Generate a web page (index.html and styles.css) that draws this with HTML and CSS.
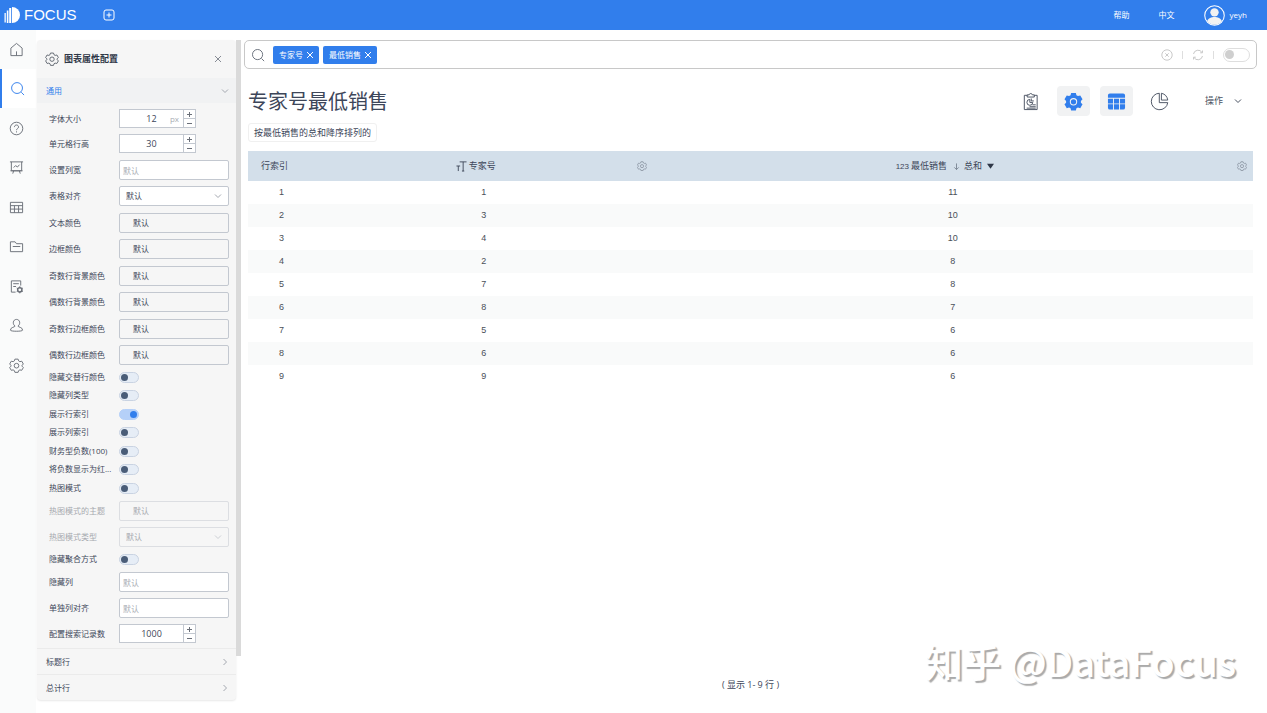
FILE: index.html
```html
<!DOCTYPE html>
<html lang="zh-CN">
<head>
<meta charset="utf-8">
<title>FOCUS</title>
<meta name="viewport" content="width=device-width, initial-scale=1">
<link rel="stylesheet" href="styles.css">
</head>
<body>
<svg class="defs" aria-hidden="true">
  <symbol id="gear" viewBox="0 0 16 16"><path d="M6.3 1.2h3.4l.6 1.9 1.3.8 2-.5 1.7 3-1.4 1.4v.9l1.4 1.5-1.7 2.9-2-.4-1.3.7-.6 1.9H6.3l-.6-1.9-1.3-.7-2 .4-1.7-2.9 1.4-1.5v-.9L.7 6.4l1.7-3 2 .5 1.3-.8z"/><circle cx="8" cy="8.2" r="2.5"/></symbol>
  <symbol id="down" viewBox="0 0 8 8"><path d="M1 2.5l3 3 3-3"/></symbol>
  <symbol id="right" viewBox="0 0 8 8"><path d="M2.5 1l3 3-3 3"/></symbol>
  <symbol id="cross" viewBox="0 0 8 8"><path d="M1 1l6 6M7 1L1 7"/></symbol>
  <symbol id="plus" viewBox="0 0 7 7"><path d="M1 3.5h5M3.5 1v5"/></symbol>
  <symbol id="minus" viewBox="0 0 7 7"><path d="M1 3.5h5"/></symbol>
  <symbol id="search" viewBox="0 0 16 16"><circle cx="7.5" cy="7.5" r="5.8"/><path d="M12 12l3 3"/></symbol>
</svg>
<header class="topbar">
  <a class="logo" href="#">
    <svg class="logo-mark" viewBox="0 0 16 16"><path d="M8 0a8 8 0 0 1 0 16z"/><path d="M5.2 1h2v15h-2zM2.8 3.5h1.6V16H2.8zM.5 6h1.3v9.5H.5z"/></svg>
    <span>FOCUS</span>
  </a>
  <button class="icon-btn" aria-label="新建"><svg class="ico12" viewBox="0 0 12 12"><rect x="1" y="1" width="10" height="10" rx="2"/><path d="M6 3.5v5M3.5 6h5"/></svg></button>
  <nav class="toplinks">
    <a href="#">帮助</a>
    <a href="#">中文</a>
    <a class="user" href="#"><svg class="avatar" viewBox="0 0 20 20"><circle cx="10" cy="10" r="9.3"/><circle class="solid" cx="10" cy="7" r="4"/><path class="solid" d="M3 15.500c1-3 4-4 7-4s6 1 7 4a9 9 0 0 1-14 0z"/></svg>yeyh</a>
  </nav>
</header>
<div class="shell">
  <nav class="side">
    <div class="side-group">
      <a href="#" aria-label="首页"><svg viewBox="0 0 16 16"><path d="M2 6.500L8 1.500l6 5v8H2zM8 10v4.500"/></svg></a>
      <a class="active" href="#" aria-label="搜索"><svg viewBox="0 0 16 16"><use href="#search"/></svg></a>
    </div>
    <div class="side-group">
      <a href="#" aria-label="帮助"><svg viewBox="0 0 16 16"><circle cx="8" cy="8" r="6.700"/><path d="M5.800 6.500c0-3 4.400-3 4.400 0C10.200 8 8 8 8 9.800M8 11v1.200"/></svg></a>
      <a href="#" aria-label="看板"><svg viewBox="0 0 16 16"><path d="M1 2h14M2.500 2v9.500h11V2M1.500 11.500h13M5 11.500L4 14.500M11 11.500l1 3M5 8l2-2 2 1.500L11.200 5"/></svg></a>
    </div>
    <div class="side-group">
      <a href="#" aria-label="数据表"><svg viewBox="0 0 16 16"><path d="M1.500 2.500h13v11h-13zM1.500 6h13M1.500 9.700h13M5.800 6v7.500M10.200 6v7.500"/></svg></a>
      <a href="#" aria-label="资源"><svg viewBox="0 0 16 16"><path d="M1.500 3h5l1.500 2h6.500v8.500h-13zM4 8h8"/></svg></a>
    </div>
    <div class="side-group">
      <a href="#" aria-label="任务"><svg viewBox="0 0 16 16"><path d="M7 14H2.500V2h10v5M4.500 5h6M4.500 8h3"/><circle cx="11.500" cy="11.500" r="2.300" stroke-width="1.600"/><path d="M11.500 7.700v1.500M11.500 13.800v1.500M8.200 9.600l1.300.8M13.500 12.600l1.300.8M8.200 13.400l1.300-.8M13.500 10.400l1.300-.8"/></svg></a>
      <a href="#" aria-label="用户"><svg viewBox="0 0 16 16"><path d="M6.500 8.500C3.500 7 4 1.500 8 1.500s4.500 5.500 1.500 7c0 1.500 5 1 5 4.500 0 1.500-13 1.500-13 0 0-3.500 5-3 5-4.500z"/></svg></a>
    </div>
    <div class="side-group">
      <a href="#" aria-label="设置"><svg viewBox="0 0 16 16"><use href="#gear"/></svg></a>
    </div>
  </nav>

  <aside class="config">
    <div class="panel">
      <div class="panel-head">
        <svg class="ico14"><use href="#gear"/></svg>
        <h2>图表属性配置</h2>
        <button class="icon-btn" aria-label="关闭"><svg class="ico8"><use href="#cross"/></svg></button>
      </div>
      <button class="section open">通用<svg class="ico8"><use href="#down"/></svg></button>
      <form class="fields">
        <div class="group">
          <div class="row"><label for="fs">字体大小</label><span class="num"><input id="fs" value="12"><em>px</em><span class="steps"><button type="button" aria-label="增加"><svg><use href="#plus"/></svg></button><button type="button" aria-label="减少"><svg><use href="#minus"/></svg></button></span></span></div>
          <div class="row"><label for="rh">单元格行高</label><span class="num"><input id="rh" value="30"><span class="steps"><button type="button" aria-label="增加"><svg><use href="#plus"/></svg></button><button type="button" aria-label="减少"><svg><use href="#minus"/></svg></button></span></span></div>
        </div>
        <div class="group">
          <div class="row tall"><label for="cw">设置列宽</label><input class="box" id="cw" placeholder="默认"></div>
          <div class="row tall"><label for="al">表格对齐</label><span class="pick"><select class="box" id="al"><option>默认</option></select><svg class="ico8"><use href="#down"/></svg></span></div>
        </div>
        <div class="group">
          <div class="row tall"><label for="c1">文本颜色</label><button type="button" class="box" id="c1">默认</button></div>
          <div class="row tall"><label for="c2">边框颜色</label><button type="button" class="box" id="c2">默认</button></div>
        </div>
        <div class="group">
          <div class="row tall"><label for="c3">奇数行背景颜色</label><button type="button" class="box" id="c3">默认</button></div>
          <div class="row tall"><label for="c4">偶数行背景颜色</label><button type="button" class="box" id="c4">默认</button></div>
        </div>
        <div class="group">
          <div class="row tall"><label for="c5">奇数行边框颜色</label><button type="button" class="box" id="c5">默认</button></div>
          <div class="row tall"><label for="c6">偶数行边框颜色</label><button type="button" class="box" id="c6">默认</button></div>
          <div class="row short"><label for="t1">隐藏交替行颜色</label><input class="toggle" type="checkbox" id="t1"></div>
          <div class="row short"><label for="t2">隐藏列类型</label><input class="toggle" type="checkbox" id="t2"></div>
        </div>
        <div class="group">
          <div class="row short"><label for="t3">展示行索引</label><input class="toggle" type="checkbox" id="t3" checked></div>
          <div class="row short"><label for="t4">展示列索引</label><input class="toggle" type="checkbox" id="t4"></div>
        </div>
        <div class="group">
          <div class="row short"><label for="t5">财务型负数(100)</label><input class="toggle" type="checkbox" id="t5"></div>
          <div class="row short"><label for="t6">将负数显示为红...</label><input class="toggle" type="checkbox" id="t6"></div>
        </div>
        <div class="group">
          <div class="row short"><label for="t7">热图模式</label><input class="toggle" type="checkbox" id="t7"></div>
        </div>
        <div class="group">
          <div class="row tall off"><label for="h1">热图模式的主题</label><button type="button" class="box" id="h1" disabled>默认</button></div>
          <div class="row tall off"><label for="h2">热图模式类型</label><span class="pick"><select class="box" id="h2" disabled><option>默认</option></select><svg class="ico8"><use href="#down"/></svg></span></div>
          <div class="row short"><label for="t8">隐藏聚合方式</label><input class="toggle" type="checkbox" id="t8"></div>
        </div>
        <div class="group">
          <div class="row tall"><label for="hc">隐藏列</label><input class="box" id="hc" placeholder="默认"></div>
          <div class="row tall"><label for="sa">单独列对齐</label><input class="box" id="sa" placeholder="默认"></div>
          <div class="row"><label for="rc">配置搜索记录数</label><span class="num"><input id="rc" value="1000"><span class="steps"><button type="button" aria-label="增加"><svg><use href="#plus"/></svg></button><button type="button" aria-label="减少"><svg><use href="#minus"/></svg></button></span></span></div>
        </div>
      </form>
      <button class="section">标题行<svg class="ico8"><use href="#right"/></svg></button>
      <button class="section">总计行<svg class="ico8"><use href="#right"/></svg></button>
    </div>
    <div class="scroll"></div>
  </aside>

  <main class="main">
    <div class="searchbar">
      <svg class="ico14"><use href="#search"/></svg>
      <button class="tag">专家号<svg class="ico8"><use href="#cross"/></svg></button>
      <button class="tag">最低销售<svg class="ico8"><use href="#cross"/></svg></button>
      <input class="query" type="text" aria-label="搜索">
      <div class="search-tools">
        <button class="icon-btn" aria-label="清除"><svg class="ico12" viewBox="0 0 12 12"><circle cx="6" cy="6" r="5.200"/><path d="M4.300 4.300l3.400 3.400M7.700 4.300L4.300 7.700"/></svg></button>
        <i class="bar"></i>
        <button class="icon-btn" aria-label="刷新"><svg class="ico12" viewBox="0 0 12 12"><path d="M1.500 5a4.600 4.600 0 0 1 8.500-1.500M10.500 7A4.600 4.600 0 0 1 2 8.500M10.500 1.500v2.300H8.200M1.500 10.500V8.200h2.300"/></svg></button>
        <i class="bar"></i>
        <input class="toggle wide" type="checkbox" aria-label="模式">
      </div>
    </div>
    <div class="content">
      <div class="titlebar">
        <h1>专家号最低销售</h1>
        <div class="tools">
          <button aria-label="报告"><svg viewBox="0 0 20 20"><path d="M6.500 3.500H3.500v15h13.500v-15h-3M6.500 5.300V3h2a1.800 1.800 0 0 1 3.500 0h2v2.300zM9.300 7.800A3.100 3.100 0 1 0 12.400 11H9.300zM10.800 6.800v2.600h2.700M12 13.500h3.500M9 15.500h6.500M6 17h9.500"/></svg></button>
          <button class="on" aria-label="配置"><svg viewBox="0 0 20 20"><path class="fill" fill-rule="evenodd" d="M7.500 1h5l.6 2.400 1.600.9 2.400-.7 2.400 4.100-1.700 1.700v1.800l1.700 1.700-2.400 4.100-2.400-.7-1.600.9-.6 2.300h-5l-.6-2.300-1.600-.9-2.400.7-2.400-4.100 1.700-1.700V9.400L.5 7.700l2.400-4.100 2.400.7 1.600-.9zM10 6.400a3.900 3.900 0 1 0 0 7.800 3.900 3.900 0 0 0 0-7.800zM10 7.500a2.800 2.800 0 1 1 0 5.600A2.800 2.800 0 0 1 10 7.500z"/></svg></button>
          <button class="on" aria-label="表格"><svg viewBox="0 0 20 20"><path class="fill" d="M1 3.500a2 2 0 0 1 2-2h14a2 2 0 0 1 2 2V6H1zM1 7h5.300v5H1zM7.300 7h5.400v5H7.300zM13.700 7H19v5h-5.300zM1 13h5.300v5.500H3a2 2 0 0 1-2-2zM7.300 13h5.400v5.500H7.300zM13.700 13H19v3.500a2 2 0 0 1-2 2h-3.300z"/></svg></button>
          <button aria-label="图表"><svg viewBox="0 0 20 20"><path d="M9.800 1.300a8.700 8.700 0 1 0 8.900 9.900H9.800zM12 1.300v7.200h6.700A8.700 8.700 0 0 0 12 1.300z"/></svg></button>
          <button class="menu">操作<svg class="ico8"><use href="#down"/></svg></button>
        </div>
      </div>
      <div class="sortnote">按最低销售的总和降序排列的</div>
      <table class="grid">
        <colgroup><col class="c-index"><col class="c-expert"><col></colgroup>
        <thead><tr>
          <th>行索引</th>
          <th><div class="th"><span class="th-label"><svg class="type" viewBox="0 0 12 12"><path d="M4 1.500h7.500M7.800 1.500v10M.5 6h4M2.500 6v5.500M6.500 11.500h2.500"/></svg>专家号</span><button class="icon-btn" aria-label="列设置"><svg class="ico10"><use href="#gear"/></svg></button></div></th>
          <th><div class="th"><span class="th-label"><small>123</small>最低销售<svg class="arrow" viewBox="0 0 8 8"><path d="M4 .5v7M1.500 5L4 7.500 6.500 5"/></svg>总和<svg class="tri" viewBox="0 0 8 8"><path d="M0 1.500h8L4 7z"/></svg></span><button class="icon-btn" aria-label="列设置"><svg class="ico10"><use href="#gear"/></svg></button></div></th>
        </tr></thead>
        <tbody>
          <tr><td>1</td><td>1</td><td>11</td></tr>
          <tr><td>2</td><td>3</td><td>10</td></tr>
          <tr><td>3</td><td>4</td><td>10</td></tr>
          <tr><td>4</td><td>2</td><td>8</td></tr>
          <tr><td>5</td><td>7</td><td>8</td></tr>
          <tr><td>6</td><td>8</td><td>7</td></tr>
          <tr><td>7</td><td>5</td><td>6</td></tr>
          <tr><td>8</td><td>6</td><td>6</td></tr>
          <tr><td>9</td><td>9</td><td>6</td></tr>
        </tbody>
      </table>
    </div>
    <p class="count">( 显示 1- 9 行 )</p>
  </main>
</div>
<div class="watermark">知乎 @DataFocus</div>
</body>
</html>
```
FILE: styles.css
```css
* { box-sizing: border-box; }
body {
  margin: 0;
  min-height: 100vh;
  display: flex;
  flex-direction: column;
  position: relative;
  background: #fff;
  color: #3d4659;
  font: 8px/12px "Open Sans", "Noto Sans CJK SC", sans-serif;
}
button, input, select { font: inherit; color: inherit; margin: 0; padding: 0; }
button { background: none; border: 0; }
a { color: inherit; text-decoration: none; }
svg { display: block; flex: none; fill: none; stroke: currentColor; stroke-width: 1; }
.defs { position: absolute; width: 0; height: 0; }
.ico8 { width: 8px; height: 8px; }
.ico10 { width: 10px; height: 10px; }
.ico12 { width: 12px; height: 12px; }
.ico14 { width: 14px; height: 14px; }

.topbar { display: flex; align-items: center; height: 30px; padding: 0 20px 0 4px; background: #317eec; color: #fff; }
.logo { display: flex; align-items: center; gap: 4px; margin-right: 26px; font: 15px/20px "Liberation Sans", sans-serif; }
.logo-mark { width: 16px; height: 16px; fill: #fff; stroke: none; }
.toplinks { display: flex; align-items: center; gap: 29px; margin-left: auto; }
.toplinks a:first-child { margin-left: 0; }
.user { display: flex; align-items: center; gap: 5px; }
.avatar { width: 21px; height: 21px; }
.avatar .solid { fill: #f2f2f2; stroke: none; }

.shell { flex: 1; display: flex; }
.side { display: flex; flex-direction: column; gap: 1px; width: 36px; background: #fafbfb; color: #6a6f78; }
.side a { display: flex; align-items: center; height: 39px; padding-left: 9px; }
.side svg { width: 15px; height: 15px; }
.side a.active { background: #fff; color: #317eec; border-left: 2px solid #317eec; padding-left: 8px; }

.config { display: flex; align-items: flex-start; padding: 10px 0 0 1px; }
.panel { width: 199px; background: #f6f6f6; border-radius: 4px; box-shadow: 0 1px 2px #e8e8e8; }
.scroll { width: 5px; height: 616px; background: #dadada; }
.panel-head { display: flex; align-items: center; gap: 5px; height: 38px; padding: 0 14px 0 8px; color: #555b66; }
.panel-head h2 { flex: 1; margin: 0; font-size: 9px; font-weight: 600; color: #2f3747; }
.panel-head button { color: #868b94; }
.section { display: flex; align-items: center; justify-content: space-between; width: 100%; height: 26px; padding: 0 7px 0 9px; border-top: 1px solid #ebebeb; }
.section svg { color: #a4a8b0; }
.section.open { height: 25px; background: #f1f2f3; border: 0; color: #317eec; }

.fields { display: flex; flex-direction: column; gap: 1px; padding: 3px 7px 2px 12px; }
.row { display: grid; grid-template-columns: 70px 1fr; align-items: center; height: 25px; }
.row.tall { height: 26px; }
.row.short { height: 18px; }
.row label { white-space: nowrap; }
.box { width: 100%; height: 20px; padding: 0 3px; border: 1px solid #c3c8d0; border-radius: 2px; background: #fff; text-align: left; }
button.box { padding-left: 13px; background: #f6f6f6; }
select.box { padding-left: 6px; appearance: none; opacity: 1; }
input::placeholder { color: #a9adb4; opacity: 1; }
.pick { position: relative; }
.pick svg { position: absolute; right: 7px; top: 6px; color: #a4a8b0; }
.off { color: #a6a9af; }
.off .box { border-color: #dcdee2; color: #a6a9af; background: #f6f6f6; }
.off svg { color: #cdd0d5; }
.num { position: relative; display: flex; width: 77px; height: 19px; border: 1px solid #c3c8d0; background: #fff; }
.num input { flex: 1; min-width: 0; border: 0; background: none; text-align: center; font-size: 9px; }
.num em { position: absolute; right: 16px; top: 3px; font-style: normal; color: #a9adb4; }
.steps { display: flex; flex-direction: column; width: 12px; border-left: 1px solid #c3c8d0; color: #6a6f78; }
.steps button { flex: 1; display: flex; align-items: center; justify-content: center; }
.steps svg { width: 7px; height: 7px; }
.steps button + button { border-top: 1px solid #c3c8d0; }
.toggle { appearance: none; display: flex; align-items: center; width: 20px; height: 11px; padding: 0 1px; border: 1px solid #c9d3e2; border-radius: 6px; background: #e6edf6; }
.toggle::before { content: ""; width: 7px; height: 7px; border-radius: 50%; background: #4a5d78; }
.toggle:checked { justify-content: flex-end; background: #b5d0f8; border-color: #b5d0f8; }
.toggle:checked::before { background: #317eec; }

.main { flex: 1; min-width: 0; display: flex; flex-direction: column; padding: 10px 10px 22px 3px; }
.searchbar { display: flex; align-items: center; gap: 4px; height: 29px; padding: 0 6px; border: 1px solid #c8c8c8; border-radius: 5px; }
.searchbar > svg { margin-right: 4px; color: #5c6370; }
.tag { display: flex; align-items: center; gap: 3px; height: 18px; padding: 0 5px 0 6px; border-radius: 2px; background: #317eec; color: #fff; }
.query { flex: 1; min-width: 0; height: 20px; border: 0; background: none; }
.search-tools { display: flex; align-items: center; gap: 9px; color: #c9c9c9; }
.bar { width: 1px; height: 8px; background: #dedede; }
.toggle.wide { width: 27px; height: 14px; border-radius: 7px; background: #fff; border-color: #dedede; }
.toggle.wide::before { width: 9px; height: 9px; background: #cfcfcf; }

.content { padding: 17px 4px 0; }
.titlebar { display: flex; align-items: center; justify-content: space-between; height: 30px; }
.titlebar h1 { margin: 0; padding-top: 2px; font-size: 20px; line-height: 30px; font-weight: 400; }
.tools { display: flex; gap: 10px; padding-right: 11px; }
.tools button { display: flex; align-items: center; justify-content: center; width: 33px; height: 30px; border-radius: 4px; color: #4a5262; }
.tools svg { width: 19px; height: 19px; }
.tools .on { background: #f1f2f3; color: #317eec; }
.tools .fill { fill: currentColor; stroke: none; }
.tools .menu { width: auto; gap: 11px; margin-left: 19px; font-size: 9px; }
.tools .menu svg { width: 8px; height: 8px; }
.sortnote { width: fit-content; margin: 7px 0 9px; padding: 2px 5px; border: 1px solid #f0f0f0; border-radius: 3px; font-size: 9px; line-height: 13px; }
.grid { width: 100%; table-layout: fixed; border-collapse: collapse; font: 9px/13px "Liberation Sans", "Noto Sans CJK SC", sans-serif; }
.c-index { width: 67px; }
.c-expert { width: 33.6%; }
.grid th { height: 30px; padding: 0; background: #d3dfea; font-weight: 400; }
.grid th:first-child { padding-left: 13px; text-align: left; }
.th { display: flex; align-items: center; padding-right: 6px; }
.th .icon-btn { color: #76818f; }
.th-label { flex: 1; display: flex; align-items: center; justify-content: center; gap: 2px; }
.th-label small { font-size: 8px; }
.type { width: 11px; height: 12px; }
.arrow { width: 7px; height: 7px; margin: 0 2px 0 4px; color: #76818f; }
.tri { width: 7px; height: 8px; margin-left: 3px; fill: #2f3747; stroke: none; }
.grid td { height: 23px; padding: 0; text-align: center; color: #4a4f58; }
.grid tbody tr:nth-child(even) { background: #f9fafa; }
.count { margin: auto 0 0; text-align: center; font-size: 9px; }
.watermark { position: absolute; right: 31px; bottom: 28px; font: 500 38px/48px "Noto Sans CJK SC", sans-serif; color: #fff; text-shadow: 2px 2px 1px #aaa; pointer-events: none; }
```
